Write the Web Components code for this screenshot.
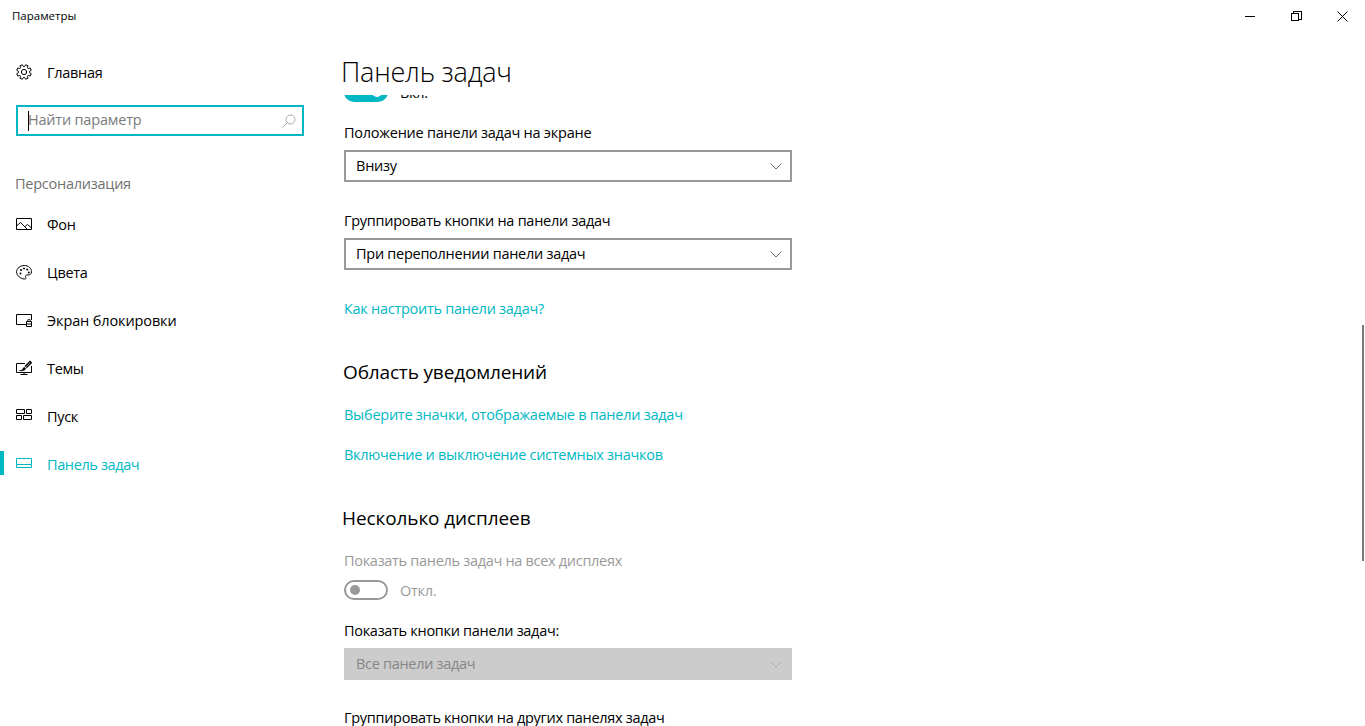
<!DOCTYPE html>
<html lang="ru">
<head>
<meta charset="utf-8">
<title>Параметры</title>
<style>
  html, body { margin: 0; height: 100%; background: #fff; }
  body { font-family: "Open Sans", "Noto Sans", sans-serif; color: #000; overflow: hidden; }
</style>
</head>
<body>
<settings-app>
  <title-bar slot="top">Параметры</title-bar>

  <side-nav slot="side">
    <nav-item slot="home" icon="gear">Главная</nav-item>
    <search-box slot="search" placeholder="Найти параметр"></search-box>
    <span slot="group">Персонализация</span>
    <nav-item icon="picture">Фон</nav-item>
    <nav-item icon="palette">Цвета</nav-item>
    <nav-item icon="lock" style="letter-spacing:-0.12px">Экран блокировки</nav-item>
    <nav-item icon="themes">Темы</nav-item>
    <nav-item icon="start">Пуск</nav-item>
    <nav-item icon="taskbar" active style="letter-spacing:-0.38px">Панель задач</nav-item>
  </side-nav>

  <settings-page slot="main" heading="Панель задач">
    <toggle-switch on>Вкл.</toggle-switch>
    <field-select label="Положение панели задач на экране" value="Внизу" style="margin-top:21px;letter-spacing:-0.24px"></field-select>
    <field-select label="Группировать кнопки на панели задач" value="При переполнении панели задач" style="margin-top:29px;letter-spacing:-0.27px"></field-select>
    <help-link style="margin-top:29px;letter-spacing:-0.27px">Как настроить панели задач?</help-link>
    <section-title style="margin-top:40px">Область уведомлений</section-title>
    <help-link style="margin-top:19px;letter-spacing:-0.25px">Выберите значки, отображаемые в панели задач</help-link>
    <help-link style="margin-top:20px;letter-spacing:-0.28px">Включение и выключение системных значков</help-link>
    <section-title style="margin-top:40px;margin-left:-2px;letter-spacing:-0.1px">Несколько дисплеев</section-title>
    <plain-label disabled style="margin-top:19px">Показать панель задач на всех дисплеях</plain-label>
    <toggle-switch style="margin-top:9px">Откл.</toggle-switch>
    <field-select label="Показать кнопки панели задач:" value="Все панели задач" disabled style="margin-top:21px"></field-select>
    <plain-label style="margin-top:28px">Группировать кнопки на других панелях задач</plain-label>
  </settings-page>
</settings-app>

<script>
// контур шестерёнки: 8 зубцов
function gearPath() {
  const pts = [];
  for (let i = 0; i < 8; i++) {
    const a = i * Math.PI / 4 + Math.PI / 8;
    [[-0.30, 5.4], [-0.17, 7.4], [0.17, 7.4], [0.30, 5.4]].forEach(([d, r]) => {
      pts.push((8 + r * Math.cos(a + d)).toFixed(2) + ' ' + (8 + r * Math.sin(a + d)).toFixed(2));
    });
  }
  return 'M' + pts.join('L') + 'Z';
}

const ICONS = {
  gear: `<path d="${gearPath()}"/><circle cx="8" cy="8" r="2.6"/>`,
  picture: `<path d="M.5 2.500h15v11H.5zM.5 10l4-3.500 7 7M9 10.500l2.500-2 4 3.500"/>`,
  palette: `<path d="M8.500 1.500c3.800 0 7 2.700 7 6.300 0 2.500-1.800 3.200-3.400 3.100-1.500-.1-2.600.4-2.600 1.500 0 .8.500 1.200.5 1.700 0 .6-.6.900-1.500.9-3.600 0-7.900-3.200-7.900-7.200 0-3.600 3.700-6.300 7.900-6.300z"/><g fill="currentColor" stroke="none"><circle cx="5" cy="6" r="1"/><circle cx="8" cy="4.500" r="1"/><circle cx="11.200" cy="5.500" r="1"/><circle cx="12.800" cy="8.500" r="1"/><circle cx="4.500" cy="9.500" r="1"/></g>`,
  lock: `<path d="M10 12.500H.5v-10h15V8M10.500 9.500h5v5h-5zM11.800 9.500V8a1.300 1.300 0 0 1 2.400 0v1.500M10.500 12h5"/>`,
  themes: `<path d="M9 3.500H.5v9h15V6M8 12.500v2M4.500 14.500h7"/><path d="M3.500 10.500c2.200.2 3.200-.7 3.500-2.200l1.500-1 1.200 1.200c-.6 1.800-3.200 2.800-6.200 2z" fill="currentColor" stroke-width=".6"/><path d="M9 6.500l5-5 1.300 1.300-5 5" stroke-width="1.300"/>`,
  start: `<path d="M.5 1.500h8v4h-8zM10.500 1.500h5v4h-5zM.5 7.500h5v4h-5zM7.500 7.500h8v4h-8z"/>`,
  taskbar: `<path d="M.5 2.500h15v9H.5zM.5 8.500h15"/>`
};

class SettingsApp extends HTMLElement {
  constructor() {
    super();
    this.attachShadow({ mode: 'open' });
    this.shadowRoot.innerHTML = `
      <style>
        :host { display: flex; flex-direction: column; height: 726px; width: 1365px; position: relative; }
        .body { display: flex; flex: 1; min-height: 0; }
        .thumb { position: absolute; left: 1362px; top: 325px; width: 2px; height: 236px; background: #7a7a7a; }
      </style>
      <slot name="top"></slot>
      <div class="body">
        <slot name="side"></slot>
        <slot name="main"></slot>
      </div>
      <div class="thumb"></div>
    `;
  }
}

class TitleBar extends HTMLElement {
  constructor() {
    super();
    this.attachShadow({ mode: 'open' });
    this.shadowRoot.innerHTML = `
      <style>
        :host { display: flex; height: 32px; padding-left: 12px; font-size: 11.500px; flex: none; }
        .caption { flex: 1; line-height: 31px; }
        .btns { display: flex; }
        .btn { width: 46px; height: 32px; display: flex; align-items: center; justify-content: center; }
        svg { width: 11px; height: 11px; fill: none; stroke: #000; stroke-width: 1; shape-rendering: crispEdges; }
      </style>
      <span class="caption"><slot></slot></span>
      <div class="btns">
        <div class="btn"><svg viewBox="0 0 11 11"><path d="M0 5.500h10"/></svg></div>
        <div class="btn"><svg viewBox="0 0 11 11"><path d="M.5 2.500h7v7h-7zM2.500 2.500v-2h7.500v7.500h-2"/></svg></div>
        <div class="btn"><svg viewBox="0 0 11 11" style="shape-rendering:auto"><path d="M.5.500l10 10M10.500.500l-10 10"/></svg></div>
      </div>
    `;
  }
}

class SideNav extends HTMLElement {
  constructor() {
    super();
    this.attachShadow({ mode: 'open' });
    this.shadowRoot.innerHTML = `
      <style>
        :host { display: flex; flex-direction: column; width: 330px; flex: none; }
        .home { margin-top: 16px; }
        .search { margin: 9px 0 0 16px; }
        .group { margin: 38px 0 0 15px; height: 20px; line-height: 20px; font-size: 14.500px; color: #717171; letter-spacing: -0.250px; }
        .items { display: flex; flex-direction: column; margin-top: 6px; }
      </style>
      <div class="home"><slot name="home"></slot></div>
      <div class="search"><slot name="search"></slot></div>
      <div class="group"><slot name="group"></slot></div>
      <div class="items"><slot></slot></div>
    `;
  }
}

class NavItem extends HTMLElement {
  constructor() {
    super();
    this.attachShadow({ mode: 'open' });
    const icon = ICONS[this.getAttribute('icon')] || '';
    this.shadowRoot.innerHTML = `
      <style>
        :host { display: flex; align-items: center; height: 48px; position: relative; font-size: 14.500px; letter-spacing: -0.300px; }
        :host([active]) { color: #00b7c3; }
        :host([active])::before { content: ""; position: absolute; left: 0; top: 11px; width: 4px; height: 24px; background: #00b7c3; }
        svg { width: 16px; height: 16px; margin: 0 15px 0 16px; fill: none; stroke: currentColor; stroke-width: 1; flex: none; }
      </style>
      <svg viewBox="0 0 16 16">${icon}</svg>
      <span><slot></slot></span>
    `;
  }
}

class SearchBox extends HTMLElement {
  constructor() {
    super();
    this.attachShadow({ mode: 'open' });
    this.shadowRoot.innerHTML = `
      <style>
        :host { display: flex; align-items: center; box-sizing: border-box; width: 288px; height: 31px; border: 2px solid #00b7c3; padding-left: 10px; font-size: 14.500px; letter-spacing: -0.200px; color: #7a7a7a; }
        .caret { width: 1px; height: 20px; background: #000; flex: none; }
        .text { flex: 1; margin: 0 0 2px -1px; }
        svg { width: 14px; height: 14px; margin-right: 6px; fill: none; stroke: #a8a8a8; stroke-width: 1; }
      </style>
      <span class="caret"></span>
      <span class="text">${this.getAttribute('placeholder')}</span>
      <svg viewBox="0 0 14 14"><circle cx="8.500" cy="5.500" r="4.500"/><path d="M5.300 8.700L.5 13.500"/></svg>
    `;
  }
}

class SettingsPage extends HTMLElement {
  constructor() {
    super();
    this.attachShadow({ mode: 'open' });
    this.shadowRoot.innerHTML = `
      <style>
        :host { display: flex; flex-direction: column; flex: 1; min-width: 0; padding-left: 12px; }
        h1 { margin: 0 0 0 -1px; box-sizing: border-box; height: 63px; padding-top: 22px; line-height: 36px; font-size: 27px; font-weight: 300; letter-spacing: -0.200px; flex: none; overflow: hidden; }
        .scroller { flex: 1; overflow: hidden; padding-left: 2px; }
        .content { display: flex; flex-direction: column; margin-top: -13px; }
      </style>
      <h1>${this.getAttribute('heading')}</h1>
      <div class="scroller"><div class="content"><slot></slot></div></div>
    `;
  }
}

class ToggleSwitch extends HTMLElement {
  constructor() {
    super();
    this.attachShadow({ mode: 'open' });
    this.shadowRoot.innerHTML = `
      <style>
        :host { display: flex; align-items: center; gap: 12px; height: 20px; font-size: 14.500px; letter-spacing: -0.300px; color: #999; }
        :host([on]) { color: #000; }
        .track { box-sizing: border-box; width: 44px; height: 20px; border: 2px solid #999; border-radius: 10px; display: flex; align-items: center; padding: 0 4px; }
        .knob { width: 10px; height: 10px; border-radius: 50%; background: #999; }
        :host([on]) .track { background: #00b7c3; border-color: #00b7c3; justify-content: flex-end; }
        :host([on]) .knob { background: #fff; }
      </style>
      <div class="track"><div class="knob"></div></div>
      <span><slot></slot></span>
    `;
  }
}

class PlainLabel extends HTMLElement {
  constructor() {
    super();
    this.attachShadow({ mode: 'open' });
    this.shadowRoot.innerHTML = `
      <style>
        :host { display: block; height: 20px; line-height: 20px; font-size: 14.500px; letter-spacing: -0.300px; white-space: nowrap; }
        :host([disabled]) { color: #999; }
      </style>
      <slot></slot>
    `;
  }
}

class FieldSelect extends HTMLElement {
  constructor() {
    super();
    this.attachShadow({ mode: 'open' });
    this.shadowRoot.innerHTML = `
      <style>
        :host { display: block; font-size: 14.500px; letter-spacing: -0.300px; }
        .label { height: 20px; line-height: 20px; margin-bottom: 7px; }
        .box { box-sizing: border-box; width: 448px; height: 32px; border: 2px solid #999; display: flex; align-items: center; justify-content: space-between; padding: 0 8px 0 10px; }
        .box span { margin-bottom: 2px; }
        svg { width: 12px; height: 7px; fill: none; stroke: #666; stroke-width: 1; }
        :host([disabled]) .box { background: #ccc; border-color: #ccc; color: #868686; }
        :host([disabled]) svg { stroke: #aaa; }
      </style>
      <div class="label">${this.getAttribute('label')}</div>
      <div class="box">
        <span>${this.getAttribute('value')}</span>
        <svg viewBox="0 0 12 7"><path d="M.5.500L6 6 11.500.500"/></svg>
      </div>
    `;
  }
}

class HelpLink extends HTMLElement {
  constructor() {
    super();
    this.attachShadow({ mode: 'open' });
    this.shadowRoot.innerHTML = `
      <style>
        :host { display: block; height: 20px; line-height: 20px; font-size: 14.500px; letter-spacing: -0.300px; color: #00b7c3; }
      </style>
      <slot></slot>
    `;
  }
}

class SectionTitle extends HTMLElement {
  constructor() {
    super();
    this.attachShadow({ mode: 'open' });
    this.shadowRoot.innerHTML = `
      <style>
        :host { display: block; height: 27px; line-height: 27px; font-size: 19px; margin-left: -1px; letter-spacing: -0.150px; }
      </style>
      <slot></slot>
    `;
  }
}

customElements.define('settings-app', SettingsApp);
customElements.define('title-bar', TitleBar);
customElements.define('side-nav', SideNav);
customElements.define('nav-item', NavItem);
customElements.define('search-box', SearchBox);
customElements.define('settings-page', SettingsPage);
customElements.define('toggle-switch', ToggleSwitch);
customElements.define('plain-label', PlainLabel);
customElements.define('field-select', FieldSelect);
customElements.define('help-link', HelpLink);
customElements.define('section-title', SectionTitle);
</script>
</body>
</html>
